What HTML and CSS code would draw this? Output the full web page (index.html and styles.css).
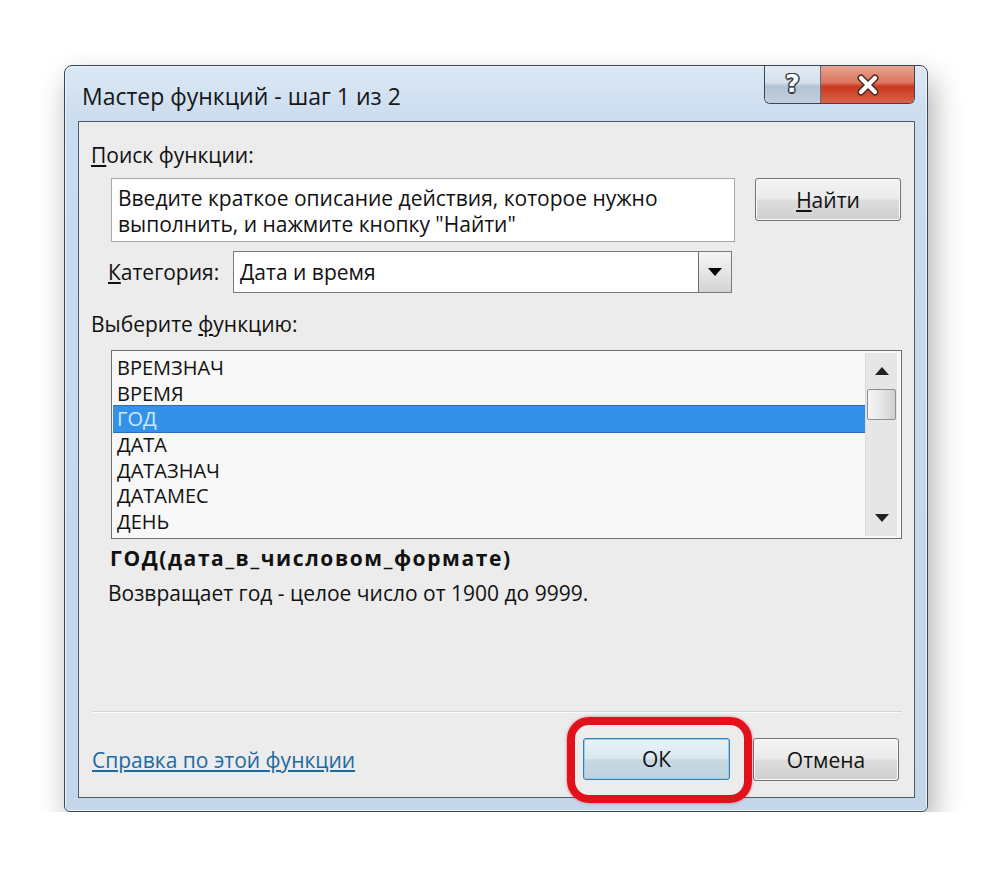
FILE: index.html
```html
<!DOCTYPE html>
<html lang="ru">
<head>
  <meta charset="UTF-8" />
  <title>Мастер функций - шаг 1 из 2</title>
  <meta name="viewport" content="width=device-width, initial-scale=1.0" />
  <link rel="stylesheet" href="styles.css">
</head>
<body>

  <div class="dialog">
    <div class="titlebar">
      <span class="title">Мастер функций - шаг 1 из 2</span>
      <div class="caption-buttons">
        <span class="cap-btn help">?</span>
        <span class="cap-btn close">
          <svg width="30" height="22" viewBox="0 0 30 22">
            <path d="M8 4 L22 18 M22 4 L8 18" stroke="#4a2a20" stroke-width="7" stroke-linecap="round" fill="none"/>
            <path d="M8 4 L22 18 M22 4 L8 18" stroke="#ffffff" stroke-width="4.2" stroke-linecap="round" fill="none"/>
          </svg>
        </span>
      </div>
    </div>

    <div class="client">
      <div class="label"><u>П</u>оиск функции:</div>

      <div class="search-row">
        <div class="search-box">Введите краткое описание действия, которое нужно выполнить, и нажмите кнопку "Найти"</div>
        <button class="btn find"><u>Н</u>айти</button>
      </div>

      <div class="category-row">
        <span class="category-label"><u>К</u>атегория:</span>
        <div class="select">
          <span class="select-value">Дата и время</span>
          <span class="select-arrow">
            <svg width="16" height="10" viewBox="0 0 16 10"><path d="M1 1 H15 L8 9 Z" fill="#000"/></svg>
          </span>
        </div>
      </div>

      <div class="label pick">Выберите <u>ф</u>ункцию:</div>

      <div class="listbox">
        <ul class="items">
          <li>ВРЕМЗНАЧ</li>
          <li>ВРЕМЯ</li>
          <li class="selected">ГОД</li>
          <li>ДАТА</li>
          <li>ДАТАЗНАЧ</li>
          <li>ДАТАМЕС</li>
          <li>ДЕНЬ</li>
        </ul>
        <div class="scrollbar">
          <span class="arrow">
            <svg width="14" height="8" viewBox="0 0 14 8"><path d="M0 8 L7 0 L14 8 Z" fill="#222"/></svg>
          </span>
          <span class="thumb"></span>
          <span class="track"></span>
          <span class="arrow">
            <svg width="14" height="8" viewBox="0 0 14 8"><path d="M0 0 H14 L7 8 Z" fill="#222"/></svg>
          </span>
        </div>
      </div>

      <div class="func-sig">ГОД(дата_в_числовом_формате)</div>
      <div class="func-desc">Возвращает год - целое число от 1900 до 9999.</div>

      <div class="spacer"></div>
      <div class="separator"></div>

      <div class="footer">
        <a class="help-link" href="#">Справка по этой функции</a>
        <div class="buttons">
          <span class="ok-wrap"><button class="btn ok">ОК</button></span>
          <button class="btn">Отмена</button>
        </div>
      </div>
    </div>
  </div>

</body>
</html>
```

FILE: styles.css
```css
body {
  margin: 0;
  padding: 65px 0 0 64px;
  background: #ffffff;
  font-family: "Open Sans", "Noto Sans", sans-serif;
  font-size: 21px;
  color: #111;
}

.dialog {
  width: 862px;
  height: 745px;
  border: 1px solid #3a4552;
  border-radius: 8px 8px 6px 6px;
  background: linear-gradient(#dce8f5, #c9dbee 60px, #c3d6ea);
  box-shadow: 5px 14px 30px rgba(0, 0, 0, 0.32), inset 0 0 0 1px #eef4fb;
  display: flex;
  flex-direction: column;
}

.titlebar {
  height: 55px;
  display: flex;
  justify-content: space-between;
  align-items: flex-start;
  flex-shrink: 0;
}

.title {
  margin: 16px 0 0 17px;
  font-size: 23px;
  line-height: 28px;
  color: #161616;
}

.caption-buttons {
  display: flex;
  margin-right: 12px;
  border: 1px solid #3b4654;
  border-top: none;
  border-radius: 0 0 6px 6px;
  overflow: hidden;
  height: 37px;
}

.cap-btn {
  display: flex;
  align-items: center;
  justify-content: center;
}

.cap-btn.help {
  width: 55px;
  border-right: 1px solid #5e6c7a;
  background: linear-gradient(#e4ecf5, #d5e0ec 45%, #b4c3d4 55%, #c2d0de);
  font-family: "DejaVu Sans", sans-serif;
  font-weight: bold;
  font-size: 25px;
  color: #ffffff;
  text-shadow: 1.5px 0 0 #34404c, -1.5px 0 0 #34404c, 0 1.5px 0 #34404c, 0 -1.5px 0 #34404c,
    1px 1px 0 #34404c, -1px -1px 0 #34404c, 1px -1px 0 #34404c, -1px 1px 0 #34404c;
  padding-bottom: 2px;
}

.cap-btn.close {
  width: 93px;
  background: linear-gradient(#eaa392, #dd7660 45%, #c8381f 55%, #d9634a);
}

.client {
  flex: 1;
  margin: 0 12px 13px 13px;
  border: 1px solid #4d5a68;
  background: #ececec;
  display: flex;
  flex-direction: column;
}

.label {
  margin: 20px 0 0 12px;
  line-height: 26px;
}

.label.pick {
  margin-top: 18px;
}

.search-row {
  display: flex;
  align-items: flex-start;
  gap: 20px;
  margin: 10px 0 0 32px;
}

.search-box {
  width: 610px;
  height: 54px;
  padding: 6px 6px 2px;
  border: 1px solid #a9a9a9;
  background: #ffffff;
  line-height: 26px;
}

.btn {
  font-family: inherit;
  font-size: 21px;
  color: #111;
  height: 43px;
  width: 146px;
  padding: 0;
  border: 1px solid #707070;
  border-radius: 3px;
  background: linear-gradient(#f3f3f3, #ebebeb 48%, #dcdcdc 52%, #d0d0d0);
  box-shadow: inset 0 0 0 1px #fbfbfb;
}

.category-row {
  display: flex;
  align-items: center;
  margin: 9px 0 0 29px;
}

.category-label {
  width: 125px;
}

.select {
  width: 497px;
  height: 40px;
  border: 1px solid #7a7a7a;
  background: #ffffff;
  display: flex;
  justify-content: space-between;
}

.select-value {
  padding-left: 6px;
  line-height: 40px;
}

.select-arrow {
  width: 32px;
  border-left: 1px solid #6e6e6e;
  background: linear-gradient(#f4f4f4, #e6e6e6 50%, #d3d3d3);
  display: flex;
  align-items: center;
  justify-content: center;
}

.listbox {
  margin: 13px 0 0 32px;
  width: 789px;
  height: 187px;
  border: 1px solid #6f6f6f;
  background: #f8f8f8;
  display: flex;
}

.items {
  flex: 1;
  list-style: none;
  margin: 0;
  padding: 4px 0 0 1px;
  font-size: 20px;
}

.items li {
  height: 25.7px;
  line-height: 25.7px;
  padding-left: 4px;
}

.items li.selected {
  background: #3392e8;
  border-top: 1px solid #2a70b8;
  border-bottom: 1px solid #2a70b8;
  margin: -1px 0;
  color: #cfe8ff;
}

.scrollbar {
  width: 31px;
  margin: 2px 4px 2px 0;
  background: #e6e6e6;
  border-left: 1px solid #dadada;
  display: flex;
  flex-direction: column;
  align-items: center;
}

.scrollbar .arrow {
  height: 36px;
  display: flex;
  align-items: center;
  justify-content: center;
}

.scrollbar .thumb {
  width: 27px;
  height: 29px;
  border: 1px solid #8e8e8e;
  border-radius: 2px;
  background: linear-gradient(90deg, #f6f6f6, #e2e2e2 60%, #cfcfcf);
}

.scrollbar .track {
  flex: 1;
}

.func-sig {
  margin: 6px 0 0 31px;
  line-height: 26px;
  font-weight: bold;
  letter-spacing: 1.6px;
}

.func-desc {
  margin: 9px 0 0 29px;
  line-height: 26px;
}

.spacer {
  flex: 1;
}

.separator {
  margin: 0 12px 0 13px;
  height: 1px;
  background: #d3d3d3;
  box-shadow: 0 1px 0 #fbfbfb;
}

.footer {
  display: flex;
  justify-content: space-between;
  align-items: center;
  margin: 26px 15px 16px 13px;
}

.help-link {
  color: #1c6aa3;
  text-decoration: underline;
}

.buttons {
  display: flex;
  gap: 23px;
}

.btn.ok {
  width: 147px;
  height: 42px;
  border-color: #3b7db4;
  background: linear-gradient(#e8f2f8, #dbe8f0 48%, #c8d9e4 52%, #bfd2de);
  box-shadow: inset 0 0 0 1px #8fd0f0;
}

.ok-wrap {
  position: relative;
  display: flex;
}

/* red annotation ring drawn over the OK button */
.ok-wrap::after {
  content: "";
  position: absolute;
  top: -21px;
  left: -16px;
  right: -22px;
  bottom: -22px;
  border: 8px solid #e2121c;
  border-radius: 22px;
  box-shadow: 0 0 3px rgba(226, 18, 28, 0.6);
  pointer-events: none;
}
```
